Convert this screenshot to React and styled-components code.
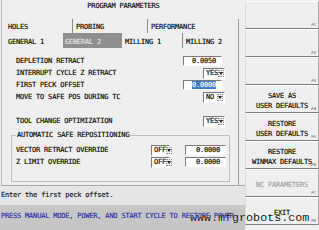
import React from 'react';
import styled, { createGlobalStyle } from 'styled-components';

const Global = createGlobalStyle`
  html, body { margin: 0; padding: 0; background: #efefef; }
  #root { width: 319px; height: 230px; }
`;

const Screen = styled.div`
  position: relative;
  width: 319px;
  height: 230px;
  overflow: hidden;
  display: flex;
  background: #efefef;
  color: #050505;
  font-family: "DejaVu Sans Mono", "Liberation Mono", monospace;
  font-size: 7px;
  letter-spacing: -0.2px;
  -webkit-text-stroke: 0.15px currentColor;
`;

const LeftColumn = styled.div`
  width: 245px;
  display: flex;
  flex-direction: column;
`;

const Frame = styled.div`
  height: 186px;
  box-sizing: border-box;
  margin-left: 1px;
  border-left: 1px solid #b8b8b8;
  border-bottom: 1px solid #a4a4a4;
  display: flex;
  flex-direction: column;
`;

const Title = styled.div`
  height: 19px;
  line-height: 12px;
  text-align: center;
`;

const TabControl = styled.div`
  width: 237px;
  box-sizing: border-box;
  flex: 1;
  display: flex;
  flex-direction: column;
  border-right: 1px solid #9c9c9c;
`;

const TabRow = styled.div`
  display: flex;
  height: ${p => p.$h}px;
  padding-left: 3px;
`;

const Tab = styled.div`
  width: ${p => p.$w}px;
  box-sizing: border-box;
  padding: ${p => p.$pt}px 0 0 ${p => (p.$active ? 2 : 3)}px;
  line-height: 9px;
  white-space: nowrap;
  border-right: ${p => (p.$divider ? '1px solid #8a8a8a' : 'none')};
  background: ${p => (p.$active ? '#8f8f8f' : 'transparent')};
  color: ${p => (p.$active ? '#e4e4e4' : 'inherit')};
`;

const Panel = styled.div`
  flex: 1;
  padding-top: 7px;
  display: flex;
  flex-direction: column;
`;

const FieldRow = styled.div`
  display: flex;
  align-items: center;
  height: 12px;
  padding-left: 14px;
`;

const GroupRow = styled.div`
  display: flex;
  align-items: center;
  height: 12px;
`;

const Label = styled.span`
  flex: 1;
  white-space: nowrap;
`;

const Spacer = styled.div`
  height: 12px;
`;

const TextBox = styled.div`
  width: ${p => p.$w}px;
  height: 10px;
  margin-right: ${p => p.$mr}px;
  box-sizing: border-box;
  border: 1px solid;
  border-color: #7a7a7a #ffffff #ffffff #7a7a7a;
  background: #ffffff;
  text-align: right;
  padding-right: 5px;
  line-height: 8px;
`;

const Selected = styled.span`
  background: #3b78c8;
  color: #ffffff;
`;

const Dropdown = styled.div`
  width: ${p => p.$w}px;
  height: 11px;
  margin-right: ${p => p.$mr}px;
  box-sizing: border-box;
  border: 1px solid;
  border-color: #7a7a7a #ffffff #ffffff #7a7a7a;
  background: #ffffff;
  display: flex;
  align-items: center;
`;

const DropText = styled.span`
  flex: 1;
  padding-left: 2px;
  line-height: 9px;
`;

const ArrowBox = styled.span`
  width: 6px;
  height: 7px;
  margin-right: 1px;
  box-sizing: border-box;
  border: 1px dotted #8a8a8a;
  background: #ececec;
  display: flex;
  align-items: center;
  justify-content: center;
`;

const Group = styled.fieldset`
  margin: 4px 8px 0 9px;
  padding: 5px 0 13px 4px;
  min-width: 0;
  border: 1px solid #bdbdbd;
`;

const Legend = styled.legend`
  margin-left: 0;
  padding: 0 1px;
  line-height: 8px;
`;

const MessageRow = styled.div`
  height: 19px;
  line-height: 19px;
  padding-left: 1px;
  background: #e6e6e6;
  color: #111;
`;

const StatusBand = styled.div`
  flex: 1;
  padding-left: 1px;
  line-height: 22px;
  background: #c6c6c6;
  color: #2a2aa8;
  white-space: nowrap;
`;

const RightColumn = styled.div`
  width: 74px;
  padding-top: 1px;
  display: flex;
  flex-direction: column;
`;

const FKey = styled.div`
  position: relative;
  height: 28px;
  box-sizing: border-box;
  padding-top: 3px;
  border-top: 1px solid #ffffff;
  border-left: 1px solid #dadada;
  border-right: 1px solid #a8a8a8;
  border-bottom: 1px solid #7e7e7e;
  display: flex;
  flex-direction: column;
  align-items: center;
  justify-content: center;
  line-height: 10px;
  text-align: center;
  white-space: nowrap;
  color: ${p => (p.$disabled ? '#a2a2a2' : 'inherit')};
`;

const FLabel = styled.span`
  position: absolute;
  right: 2px;
  bottom: 1px;
  font-family: "Liberation Sans", sans-serif;
  font-size: 4px;
  line-height: 4px;
  letter-spacing: 0;
  font-style: italic;
  color: #555;
  -webkit-text-stroke: 0;
`;

const Watermark = styled.div`
  position: absolute;
  left: 190px;
  top: 211px;
  font-family: "Liberation Mono", "DejaVu Sans Mono", monospace;
  font-size: 11.7px;
  letter-spacing: 0;
  line-height: 14px;
  color: #141414;
  -webkit-text-stroke: 0;
  text-shadow: 0 0 1px #ffffff;
  pointer-events: none;
`;

const Arrow = () => (
  <svg width="4" height="3" viewBox="0 0 4 3">
    <path d="M0 0 H4 L2 3 Z" fill="#222" />
  </svg>
);

const Select = ({ value, w, mr }) => (
  <Dropdown $w={w} $mr={mr}>
    <DropText>{value}</DropText>
    <ArrowBox><Arrow /></ArrowBox>
  </Dropdown>
);

const fkeys = [
  { id: 'F1', lines: [] },
  { id: 'F2', lines: [] },
  { id: 'F3', lines: [] },
  { id: 'F4', lines: ['SAVE AS', 'USER DEFAULTS'] },
  { id: 'F5', lines: ['RESTORE', 'USER DEFAULTS'] },
  { id: 'F6', lines: ['RESTORE', 'WINMAX DEFAULTS'] },
  { id: 'F7', lines: ['NC PARAMETERS'], disabled: true },
  { id: 'F8', lines: ['EXIT'] },
];

export default function App() {
  return (
    <>
      <Global />
      <Screen>
        <LeftColumn>
          <Frame>
            <Title>PROGRAM PARAMETERS</Title>
            <TabControl>
              <TabRow $h={14}>
                <Tab $w={68} $pt={4} $divider>HOLES</Tab>
                <Tab $w={75} $pt={4} $divider>PROBING</Tab>
                <Tab $w={80} $pt={4}>PERFORMANCE</Tab>
              </TabRow>
              <TabRow $h={15}>
                <Tab $w={58} $pt={5}>GENERAL 1</Tab>
                <Tab $w={59} $pt={5} $active>GENERAL 2</Tab>
                <Tab $w={61} $pt={5} $divider>MILLING 1</Tab>
                <Tab $w={50} $pt={5}>MILLING 2</Tab>
              </TabRow>
              <Panel>
                <FieldRow>
                  <Label>DEPLETION RETRACT</Label>
                  <TextBox $w={39} $mr={16}>0.0050</TextBox>
                </FieldRow>
                <FieldRow>
                  <Label>INTERRUPT CYCLE Z RETRACT</Label>
                  <Select value="YES" w={22} mr={13} />
                </FieldRow>
                <FieldRow>
                  <Label>FIRST PECK OFFSET</Label>
                  <TextBox $w={39} $mr={16}><Selected>0.0000</Selected></TextBox>
                </FieldRow>
                <FieldRow>
                  <Label>MOVE TO SAFE POS DURING TC</Label>
                  <Select value="NO" w={22} mr={13} />
                </FieldRow>
                <Spacer />
                <FieldRow>
                  <Label>TOOL CHANGE OPTIMIZATION</Label>
                  <Select value="YES" w={22} mr={13} />
                </FieldRow>
                <Group>
                  <Legend>AUTOMATIC SAFE REPOSITIONING</Legend>
                  <GroupRow>
                    <Label>VECTOR RETRACT OVERRIDE</Label>
                    <Select value="OFF" w={19} mr={15} />
                    <TextBox $w={41} $mr={3}>0.0000</TextBox>
                  </GroupRow>
                  <GroupRow>
                    <Label>Z LIMIT OVERRIDE</Label>
                    <Select value="OFF" w={19} mr={15} />
                    <TextBox $w={41} $mr={3}>0.0000</TextBox>
                  </GroupRow>
                </Group>
              </Panel>
            </TabControl>
          </Frame>
          <MessageRow>Enter the first peck offset.</MessageRow>
          <StatusBand>PRESS MANUAL MODE, POWER, AND START CYCLE TO RESTORE POWER.</StatusBand>
        </LeftColumn>
        <RightColumn>
          {fkeys.map(k => (
            <FKey key={k.id} $disabled={k.disabled}>
              {k.lines.map(l => <span key={l}>{l}</span>)}
              <FLabel>{k.id}</FLabel>
            </FKey>
          ))}
        </RightColumn>
        <Watermark>www.mfgrobots.com</Watermark>
      </Screen>
    </>
  );
}
